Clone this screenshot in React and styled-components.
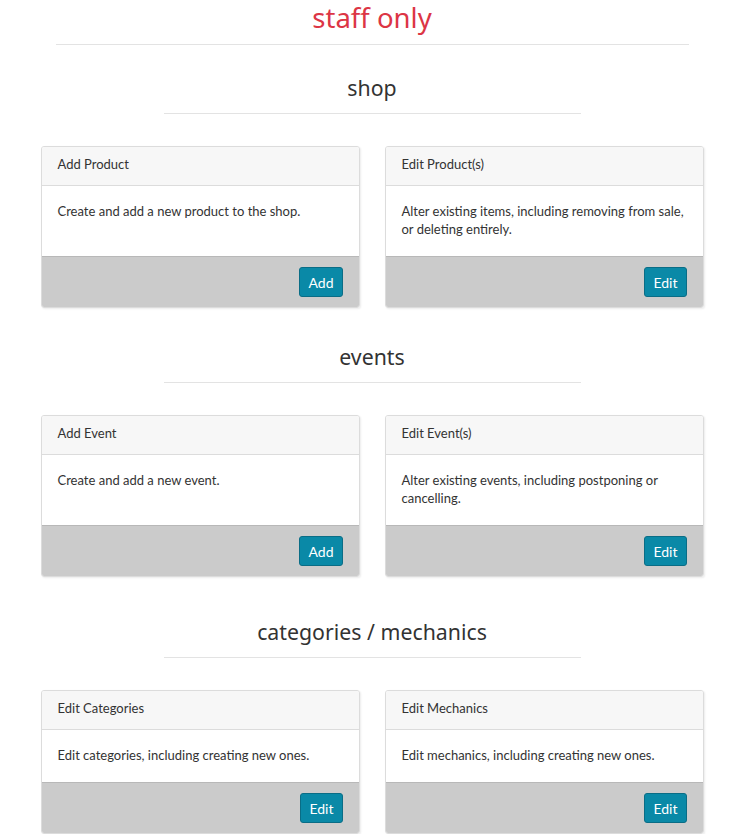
import styled, { createGlobalStyle } from "styled-components";

const GlobalStyle = createGlobalStyle`
  body {
    margin: 0;
    background: #fff;
    font-family: "Lato", "Liberation Sans", sans-serif;
    color: #333;
  }
`;

const sections = [
  {
    title: "shop",
    spacing: 29,
    cards: [
      {
        name: "Add Product",
        text: "Create and add a new product to the shop.",
        action: "Add",
      },
      {
        name: "Edit Product(s)",
        text: "Alter existing items, including removing from sale, or deleting entirely.",
        action: "Edit",
      },
    ],
  },
  {
    title: "events",
    spacing: 35,
    cards: [
      { name: "Add Event", text: "Create and add a new event.", action: "Add" },
      {
        name: "Edit Event(s)",
        text: "Alter existing events, including postponing or cancelling.",
        action: "Edit",
      },
    ],
  },
  {
    title: "categories / mechanics",
    spacing: 41,
    cards: [
      {
        name: "Edit Categories",
        text: "Edit categories, including creating new ones.",
        action: "Edit",
      },
      {
        name: "Edit Mechanics",
        text: "Edit mechanics, including creating new ones.",
        action: "Edit",
      },
    ],
  },
];

const App = () => {
  return (
    <Wrapper>
      <GlobalStyle />
      <PageTitle>staff only</PageTitle>
      <Rule $width="633px" />
      {sections.map((section) => (
        <Section key={section.title} $spacing={section.spacing}>
          <SectionTitle>{section.title}</SectionTitle>
          <Rule $width="417px" />
          <CardRow>
            {section.cards.map((card) => (
              <Card key={card.name}>
                <CardHeader>{card.name}</CardHeader>
                <CardBody>{card.text}</CardBody>
                <CardFooter>
                  <Button>{card.action}</Button>
                </CardFooter>
              </Card>
            ))}
          </CardRow>
        </Section>
      ))}
    </Wrapper>
  );
};

const Wrapper = styled.div`
  width: 663px;
  margin: 0 auto;
  padding-left: 2px;
  display: flex;
  flex-direction: column;
  align-items: center;
`;

const PageTitle = styled.h1`
  margin: 0 0 8px;
  font-family: "Noto Sans", "Liberation Sans", sans-serif;
  font-weight: 400;
  font-size: 27.5px;
  line-height: 36px;
  color: #dc3545;
`;

const Rule = styled.hr`
  width: ${(props) => props.$width};
  margin: 0;
  border: 0;
  border-top: 1px solid #e3e3e3;
`;

const Section = styled.section`
  width: 100%;
  display: flex;
  flex-direction: column;
  align-items: center;
  margin-top: ${(props) => props.$spacing}px;
`;

const SectionTitle = styled.h2`
  margin: 0 0 11px;
  font-family: "Noto Sans", "Liberation Sans", sans-serif;
  font-weight: 400;
  font-size: 21.3px;
  line-height: 28px;
  color: #333;
`;

const CardRow = styled.div`
  width: 100%;
  margin-top: 32px;
  display: grid;
  grid-template-columns: 1fr 1fr;
  column-gap: 25px;
  align-items: stretch;
`;

const Card = styled.div`
  display: flex;
  flex-direction: column;
  border: 1px solid #dcdcdc;
  border-radius: 3px;
  overflow: hidden;
  box-shadow: 1px 1px 2px rgba(0, 0, 0, 0.08);
  font-size: 13px;
`;

const CardHeader = styled.div`
  padding: 9px 16px 13px;
  line-height: 16px;
  background: #f7f7f7;
  border-bottom: 1px solid #dcdcdc;
  color: #333;
`;

const CardBody = styled.div`
  flex: 1;
  padding: 16px 16px 18px;
  line-height: 18px;
  background: #fff;
  color: #333;
`;

const CardFooter = styled.div`
  display: flex;
  justify-content: flex-end;
  padding: 10px 16px;
  background: #cbcbcb;
  border-top: 1px solid #b8b8b8;
`;

const Button = styled.button`
  height: 30px;
  padding: 0 8px;
  font-family: inherit;
  font-size: 14px;
  color: #fff;
  background: #0a89a7;
  border: 1px solid #0a6d86;
  border-radius: 3px;
  cursor: pointer;
`;

export default App;
